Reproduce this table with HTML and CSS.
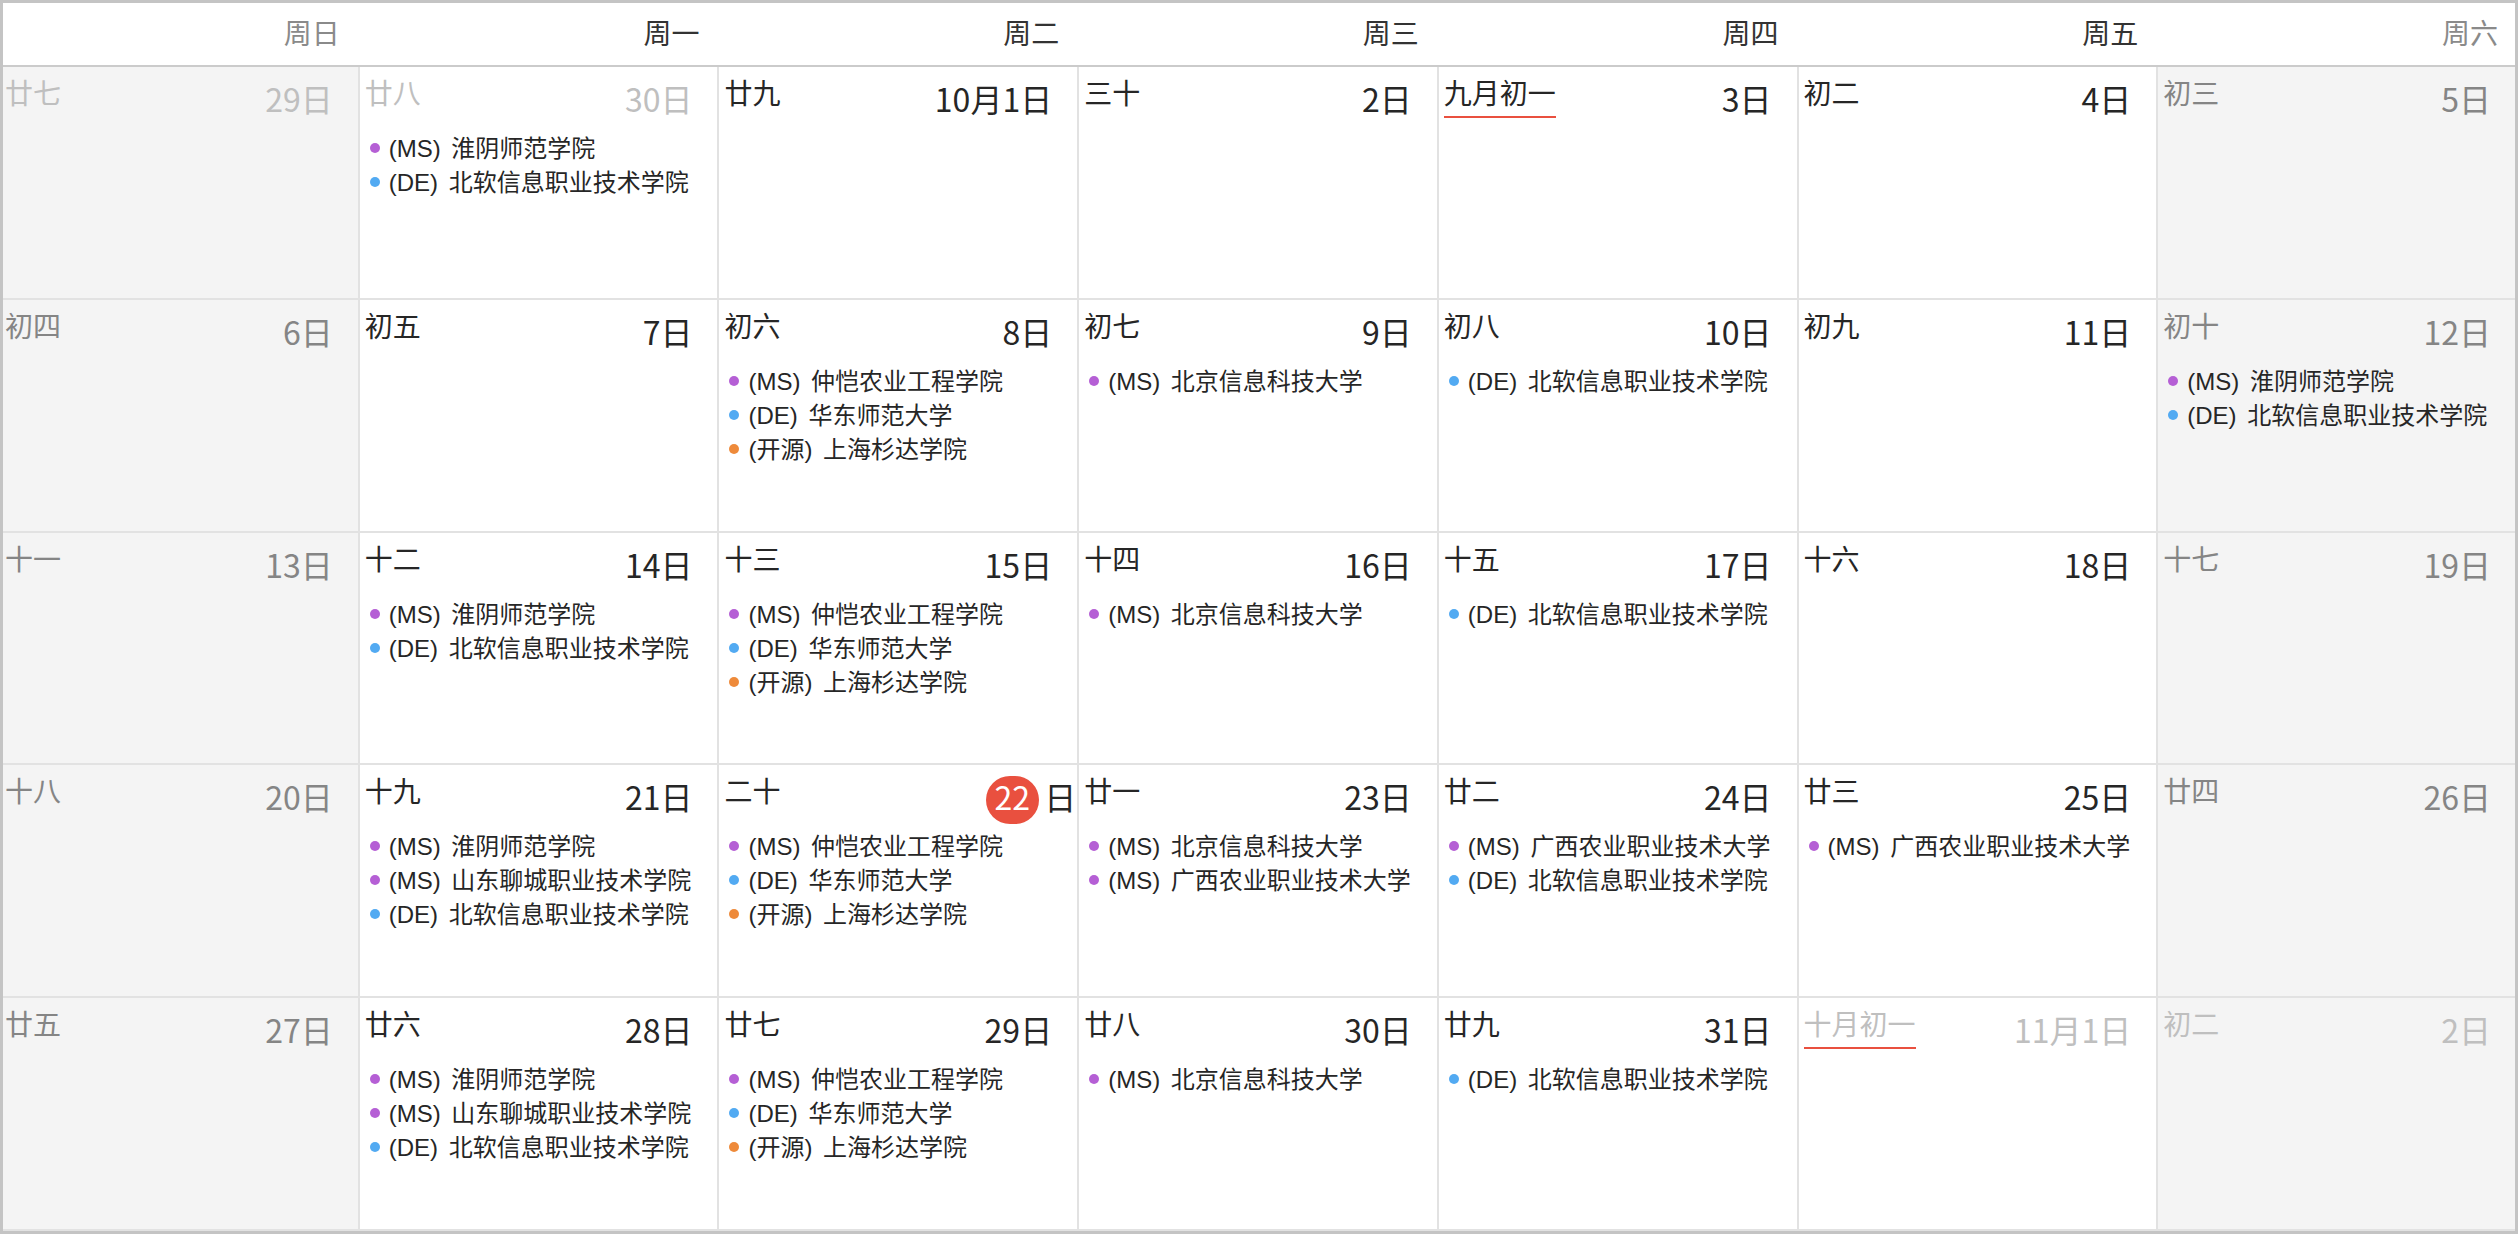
FILE: index.html
```html
<!DOCTYPE html>
<html lang="zh-CN">
<head>
  <meta charset="UTF-8" />
  <title>2024年10月</title>
  <link rel="stylesheet" href="styles.css">
</head>
<body>

  <div class="calendar">
    <!-- Week header -->
    <div class="weekdays">
      <div class="weekday weekend">周日</div>
      <div class="weekday">周一</div>
      <div class="weekday">周二</div>
      <div class="weekday">周三</div>
      <div class="weekday">周四</div>
      <div class="weekday">周五</div>
      <div class="weekday weekend">周六</div>
    </div>

    <!-- Month grid -->
    <div class="month">
      <!-- week 1 -->
      <div class="cell weekend other">
        <div class="day-head"><span class="lunar">廿七</span><span class="date">29日</span></div>
      </div>
      <div class="cell other">
        <div class="day-head"><span class="lunar">廿八</span><span class="date">30日</span></div>
        <ul class="events">
          <li class="event ms">(MS) 淮阴师范学院</li>
          <li class="event de">(DE) 北软信息职业技术学院</li>
        </ul>
      </div>
      <div class="cell">
        <div class="day-head"><span class="lunar">廿九</span><span class="date">10月1日</span></div>
      </div>
      <div class="cell">
        <div class="day-head"><span class="lunar">三十</span><span class="date">2日</span></div>
      </div>
      <div class="cell">
        <div class="day-head"><span class="lunar new-month">九月初一</span><span class="date">3日</span></div>
      </div>
      <div class="cell">
        <div class="day-head"><span class="lunar">初二</span><span class="date">4日</span></div>
      </div>
      <div class="cell weekend">
        <div class="day-head"><span class="lunar">初三</span><span class="date">5日</span></div>
      </div>

      <!-- week 2 -->
      <div class="cell weekend">
        <div class="day-head"><span class="lunar">初四</span><span class="date">6日</span></div>
      </div>
      <div class="cell">
        <div class="day-head"><span class="lunar">初五</span><span class="date">7日</span></div>
      </div>
      <div class="cell">
        <div class="day-head"><span class="lunar">初六</span><span class="date">8日</span></div>
        <ul class="events">
          <li class="event ms">(MS) 仲恺农业工程学院</li>
          <li class="event de">(DE) 华东师范大学</li>
          <li class="event oss">(开源) 上海杉达学院</li>
        </ul>
      </div>
      <div class="cell">
        <div class="day-head"><span class="lunar">初七</span><span class="date">9日</span></div>
        <ul class="events">
          <li class="event ms">(MS) 北京信息科技大学</li>
        </ul>
      </div>
      <div class="cell">
        <div class="day-head"><span class="lunar">初八</span><span class="date">10日</span></div>
        <ul class="events">
          <li class="event de">(DE) 北软信息职业技术学院</li>
        </ul>
      </div>
      <div class="cell">
        <div class="day-head"><span class="lunar">初九</span><span class="date">11日</span></div>
      </div>
      <div class="cell weekend">
        <div class="day-head"><span class="lunar">初十</span><span class="date">12日</span></div>
        <ul class="events">
          <li class="event ms">(MS) 淮阴师范学院</li>
          <li class="event de">(DE) 北软信息职业技术学院</li>
        </ul>
      </div>

      <!-- week 3 -->
      <div class="cell weekend">
        <div class="day-head"><span class="lunar">十一</span><span class="date">13日</span></div>
      </div>
      <div class="cell">
        <div class="day-head"><span class="lunar">十二</span><span class="date">14日</span></div>
        <ul class="events">
          <li class="event ms">(MS) 淮阴师范学院</li>
          <li class="event de">(DE) 北软信息职业技术学院</li>
        </ul>
      </div>
      <div class="cell">
        <div class="day-head"><span class="lunar">十三</span><span class="date">15日</span></div>
        <ul class="events">
          <li class="event ms">(MS) 仲恺农业工程学院</li>
          <li class="event de">(DE) 华东师范大学</li>
          <li class="event oss">(开源) 上海杉达学院</li>
        </ul>
      </div>
      <div class="cell">
        <div class="day-head"><span class="lunar">十四</span><span class="date">16日</span></div>
        <ul class="events">
          <li class="event ms">(MS) 北京信息科技大学</li>
        </ul>
      </div>
      <div class="cell">
        <div class="day-head"><span class="lunar">十五</span><span class="date">17日</span></div>
        <ul class="events">
          <li class="event de">(DE) 北软信息职业技术学院</li>
        </ul>
      </div>
      <div class="cell">
        <div class="day-head"><span class="lunar">十六</span><span class="date">18日</span></div>
      </div>
      <div class="cell weekend">
        <div class="day-head"><span class="lunar">十七</span><span class="date">19日</span></div>
      </div>

      <!-- week 4 -->
      <div class="cell weekend">
        <div class="day-head"><span class="lunar">十八</span><span class="date">20日</span></div>
      </div>
      <div class="cell">
        <div class="day-head"><span class="lunar">十九</span><span class="date">21日</span></div>
        <ul class="events">
          <li class="event ms">(MS) 淮阴师范学院</li>
          <li class="event ms">(MS) 山东聊城职业技术学院</li>
          <li class="event de">(DE) 北软信息职业技术学院</li>
        </ul>
      </div>
      <div class="cell">
        <div class="day-head"><span class="lunar">二十</span><span class="date is-today"><span class="today-num">22</span>日</span></div>
        <ul class="events">
          <li class="event ms">(MS) 仲恺农业工程学院</li>
          <li class="event de">(DE) 华东师范大学</li>
          <li class="event oss">(开源) 上海杉达学院</li>
        </ul>
      </div>
      <div class="cell">
        <div class="day-head"><span class="lunar">廿一</span><span class="date">23日</span></div>
        <ul class="events">
          <li class="event ms">(MS) 北京信息科技大学</li>
          <li class="event ms">(MS) 广西农业职业技术大学</li>
        </ul>
      </div>
      <div class="cell">
        <div class="day-head"><span class="lunar">廿二</span><span class="date">24日</span></div>
        <ul class="events">
          <li class="event ms">(MS) 广西农业职业技术大学</li>
          <li class="event de">(DE) 北软信息职业技术学院</li>
        </ul>
      </div>
      <div class="cell">
        <div class="day-head"><span class="lunar">廿三</span><span class="date">25日</span></div>
        <ul class="events">
          <li class="event ms">(MS) 广西农业职业技术大学</li>
        </ul>
      </div>
      <div class="cell weekend">
        <div class="day-head"><span class="lunar">廿四</span><span class="date">26日</span></div>
      </div>

      <!-- week 5 -->
      <div class="cell weekend">
        <div class="day-head"><span class="lunar">廿五</span><span class="date">27日</span></div>
      </div>
      <div class="cell">
        <div class="day-head"><span class="lunar">廿六</span><span class="date">28日</span></div>
        <ul class="events">
          <li class="event ms">(MS) 淮阴师范学院</li>
          <li class="event ms">(MS) 山东聊城职业技术学院</li>
          <li class="event de">(DE) 北软信息职业技术学院</li>
        </ul>
      </div>
      <div class="cell">
        <div class="day-head"><span class="lunar">廿七</span><span class="date">29日</span></div>
        <ul class="events">
          <li class="event ms">(MS) 仲恺农业工程学院</li>
          <li class="event de">(DE) 华东师范大学</li>
          <li class="event oss">(开源) 上海杉达学院</li>
        </ul>
      </div>
      <div class="cell">
        <div class="day-head"><span class="lunar">廿八</span><span class="date">30日</span></div>
        <ul class="events">
          <li class="event ms">(MS) 北京信息科技大学</li>
        </ul>
      </div>
      <div class="cell">
        <div class="day-head"><span class="lunar">廿九</span><span class="date">31日</span></div>
        <ul class="events">
          <li class="event de">(DE) 北软信息职业技术学院</li>
        </ul>
      </div>
      <div class="cell other">
        <div class="day-head"><span class="lunar new-month">十月初一</span><span class="date">11月1日</span></div>
      </div>
      <div class="cell weekend other">
        <div class="day-head"><span class="lunar">初二</span><span class="date">2日</span></div>
      </div>
    </div>
  </div>

</body>
</html>
```

FILE: styles.css
```css
html, body {
  margin: 0;
}

body {
  font-family: "Noto Sans CJK SC", sans-serif;
  color: #262626;
  background: #fff;
}

.calendar {
  height: 1234px;
  box-sizing: border-box;
  padding-bottom: 3px;
  display: flex;
  flex-direction: column;
  /* frame drawn on top of the cells */
  outline: 3px solid #c4c4c4;
  outline-offset: -3px;
}

.weekdays {
  display: grid;
  grid-template-columns: repeat(7, 1fr);
  height: 67px;
  box-sizing: border-box;
  border-bottom: 2px solid #cbcbcb;
}

.weekday {
  text-align: right;
  padding: 1px 20px 1px 0;
  font-size: 28px;
  line-height: 63px;
  color: #333;
}

.weekday.weekend { color: #8a8a8a; }

.month {
  flex: 1;
  display: grid;
  grid-template-columns: repeat(7, 1fr);
  grid-template-rows: repeat(5, 1fr);
}

.cell {
  min-width: 0;
  padding: 7px 25px 0 5px;
  border-right: 2px solid #e2e2e2;
  border-bottom: 2px solid #e2e2e2;
  overflow: hidden;
}

.cell.weekend {
  background: #f4f4f4;
}

.day-head {
  display: flex;
  justify-content: space-between;
  align-items: flex-start;
  height: 44px;
}

.lunar {
  font-size: 28px;
  line-height: 36px;
  white-space: nowrap;
}

.lunar.new-month {
  padding-bottom: 6px;
  border-bottom: 2px solid #e9503f;
}

.date {
  font-size: 32px;
  line-height: 40px;
  margin-top: 4px;
  white-space: nowrap;
}

.cell.weekend .lunar,
.cell.weekend .date { color: #858585; }

.cell.other .lunar,
.cell.other .date { color: #bfbfbf; }

.date.is-today { margin-right: -24px; }

.today-num {
  display: inline-block;
  height: 48px;
  box-sizing: border-box;
  padding: 0 9px;
  margin: 0 5px -14px 0;
  line-height: 41px;
  border-radius: 24px;
  background: #e9503f;
  color: #fff;
}

.events {
  list-style: none;
  margin: 14px 0 0;
  padding: 0 0 0 5px;
  font-family: "Liberation Sans", "Noto Sans CJK SC", sans-serif;
  font-size: 24px;
  line-height: 34px;
  word-spacing: 4px;
}

.event {
  white-space: nowrap;
}

.event::before {
  content: "";
  display: inline-block;
  width: 10px;
  height: 10px;
  border-radius: 50%;
  margin-right: 9px;
  vertical-align: 4px;
}

.event.ms::before { background: #b55fd5; }
.event.de::before { background: #52aaf2; }
.event.oss::before { background: #ee8a3a; }
```
